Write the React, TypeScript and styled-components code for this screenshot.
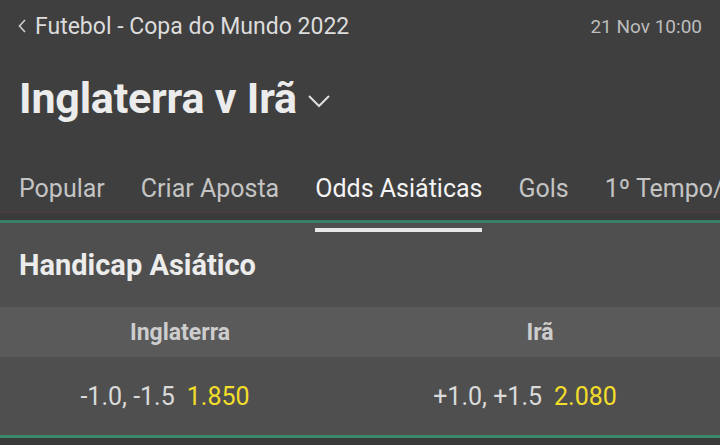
import type { FC } from "react";
import styled, { createGlobalStyle } from "styled-components";

const GlobalStyle = createGlobalStyle`
  html, body {
    margin: 0;
    padding: 0;
    background: #3a3a3a;
  }
  body {
    font-family: Roboto, "Noto Sans", "Liberation Sans", sans-serif;
    -webkit-font-smoothing: antialiased;
  }
`;

const Page = styled.div`
  width: 720px;
  height: 445px;
  overflow: hidden;
  background: #3a3a3a;
`;

const Top = styled.header`
  background: #3f3f3f;
`;

const Crumbs = styled.div`
  height: 52px;
  display: flex;
  align-items: center;
  justify-content: space-between;
  padding: 0 18px 0 17px;
  .back {
    display: flex;
    align-items: center;
    gap: 8px;
    color: #dcdcdc;
    font-size: 23px;
    svg {
      stroke: #cfcfcf;
    }
  }
  .date {
    color: #bdbdbd;
    font-size: 19px;
  }
`;

const Title = styled.h1`
  margin: 0;
  height: 98px;
  display: flex;
  align-items: center;
  gap: 10px;
  padding: 0 19px 6px;
  box-sizing: border-box;
  color: #ececec;
  font-size: 43px;
  font-weight: 700;
  letter-spacing: -0.2px;
  svg {
    margin-top: 6px;
    stroke: #dedede;
  }
`;

const Tabs = styled.nav`
  height: 63px;
  display: flex;
  gap: 36px;
  padding-left: 19px;
  box-sizing: border-box;
  white-space: nowrap;
  border-bottom: 1px solid #4a3d3f;
`;

const Tab = styled.span<{ $active?: boolean }>`
  position: relative;
  display: flex;
  align-items: center;
  padding-top: 14px;
  font-size: 25px;
  color: ${(p) => (p.$active ? "#f4f4f4" : "#c4c4c4")};
  &::after {
    content: "";
    display: ${(p) => (p.$active ? "block" : "none")};
    position: absolute;
    left: 0;
    right: 0;
    bottom: -20px;
    height: 4px;
    background: #e8e8e8;
  }
`;

const GreenRule = styled.div`
  height: 3px;
  margin-top: 7px;
  background: #3b7f67;
`;

const Market = styled.section`
  background: #4f4f4f;
  border-bottom: 3px solid #3b8a6c;
`;

const MarketTitle = styled.h2`
  margin: 0;
  height: 84px;
  display: flex;
  align-items: center;
  padding: 0 19px;
  box-sizing: border-box;
  color: #ececec;
  font-size: 29px;
  font-weight: 700;
`;

const Row = styled.div<{ $head?: boolean }>`
  display: grid;
  grid-template-columns: 1fr 1fr;
  height: ${(p) => (p.$head ? "50px" : "78px")};
  background: ${(p) => (p.$head ? "#5a5a5a" : "#4f4f4f")};
  align-items: center;
`;

const HeadCell = styled.div`
  text-align: center;
  color: #cdcdcd;
  font-size: 23px;
  font-weight: 700;
`;

const OddsCell = styled.div`
  display: flex;
  justify-content: center;
  gap: 12px;
  padding-right: 30px;
  font-size: 25px;
  .line {
    color: #dadada;
  }
  .price {
    color: #f2dd2a;
  }
`;

const selections = [
  { team: "Inglaterra", line: "-1.0, -1.5", price: "1.850" },
  { team: "Irã", line: "+1.0, +1.5", price: "2.080" },
];

const tabs = ["Popular", "Criar Aposta", "Odds Asiáticas", "Gols", "1º Tempo/Final"];

const App: FC = () => {
  return (
    <Page>
      <GlobalStyle />
      <Top>
        <Crumbs>
          <div className="back">
            <svg width="10" height="16" viewBox="0 0 10 16" fill="none" strokeWidth="1.6">
              <path d="M8 2 L2.5 8 L8 14" />
            </svg>
            <span>Futebol - Copa do Mundo 2022</span>
          </div>
          <span className="date">21 Nov 10:00</span>
        </Crumbs>
        <Title>
          <span>Inglaterra v Irã</span>
          <svg width="24" height="14" viewBox="0 0 24 14" fill="none" strokeWidth="2">
            <path d="M2 2 L12 12 L22 2" />
          </svg>
        </Title>
        <Tabs>
          {tabs.map((t) => (
            <Tab key={t} $active={t === "Odds Asiáticas"}>
              {t}
            </Tab>
          ))}
        </Tabs>
      </Top>
      <GreenRule />
      <Market>
        <MarketTitle>Handicap Asiático</MarketTitle>
        <Row $head>
          {selections.map((s) => (
            <HeadCell key={s.team}>{s.team}</HeadCell>
          ))}
        </Row>
        <Row>
          {selections.map((s) => (
            <OddsCell key={s.team}>
              <span className="line">{s.line}</span>
              <span className="price">{s.price}</span>
            </OddsCell>
          ))}
        </Row>
      </Market>
    </Page>
  );
};

export default App;
